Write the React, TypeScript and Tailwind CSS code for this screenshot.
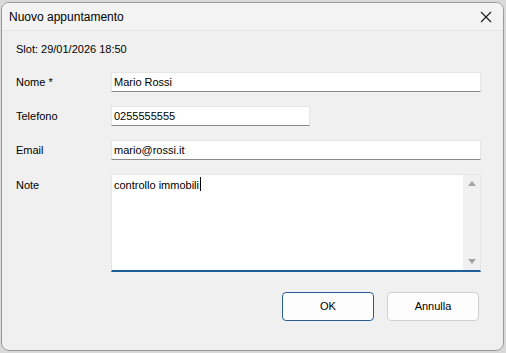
import React from "react";

const font = { fontFamily: '"Liberation Sans", Arial, sans-serif' };

function Field({ label, value, width, top }: { label: string; value: string; width: string; top: string }) {
  return (
    <div className={`flex items-center ${top}`}>
      <div className="w-[95px] text-[11px] text-[#000]">{label}</div>
      <div className={`${width} h-[20px] bg-white border border-[#e5e5e5] border-b-[#8a8a8a] flex items-center px-[2px] text-[11px] text-black`}>
        {value}
      </div>
    </div>
  );
}

export default function App() {
  return (
    <div className="w-[506px] h-[353px] bg-[#d9d9d9] pt-[2px] pl-[1px] overflow-hidden" style={font}>
      <div className="w-[503px] h-[349px] rounded-[8px] border border-[#9a9a9a] overflow-hidden flex flex-col bg-[#f0f0f0]">
        <div className="h-[28px] shrink-0 bg-[#f3f3f3] border-b border-[#e6e6e6] flex items-center justify-between pl-[7px] pr-[11px]">
          <span className="text-[12px] text-black">Nuovo appuntamento</span>
          <svg width="12" height="12" viewBox="0 0 12 12">
            <path d="M1 1 L11 11 M11 1 L1 11" stroke="#1a1a1a" strokeWidth="1.1" />
          </svg>
        </div>
        <div className="flex-1 pl-[14px] pr-[21px] flex flex-col">
          <div className="mt-[11px] h-[14px] flex items-center text-[11px] text-black">Slot: 29/01/2026 18:50</div>
          <Field label="Nome *" value="Mario Rossi" width="w-[370px]" top="mt-[16px]" />
          <Field label="Telefono" value="0255555555" width="w-[199px]" top="mt-[14px]" />
          <Field label="Email" value="mario@rossi.it" width="w-[370px]" top="mt-[14px]" />
          <div className="flex mt-[14px]">
            <div className="w-[95px] text-[11px] text-black pt-[3px]">Note</div>
            <div className="w-[370px] h-[98px] bg-white border border-[#e5e5e5] border-b-2 border-b-[#1f5f9c] flex">
              <div className="flex-1 px-[2px] pt-[2px] text-[11px] text-black flex items-start">
                <span>controllo immobili</span>
                <span className="inline-block w-px h-[14px] bg-black ml-[1px]" />
              </div>
              <div className="w-[17px] bg-[#f0f0f0] flex flex-col justify-between items-center py-[6px]">
                <svg width="8" height="5" viewBox="0 0 8 5"><path d="M0 5 L4 0 L8 5 Z" fill="#a3a3a3" /></svg>
                <svg width="8" height="5" viewBox="0 0 8 5"><path d="M0 0 L4 5 L8 0 Z" fill="#a3a3a3" /></svg>
              </div>
            </div>
          </div>
          <div className="flex justify-end gap-[13px] mt-[20px] pr-[3px]">
            <button className="w-[92px] h-[29px] rounded-[4px] border border-[#2a5e8e] bg-[#fdfdfd] text-[11px] text-black">OK</button>
            <button className="w-[92px] h-[29px] rounded-[4px] border border-[#d0d0d0] bg-[#fdfdfd] text-[11px] text-black">Annulla</button>
          </div>
        </div>
      </div>
    </div>
  );
}
